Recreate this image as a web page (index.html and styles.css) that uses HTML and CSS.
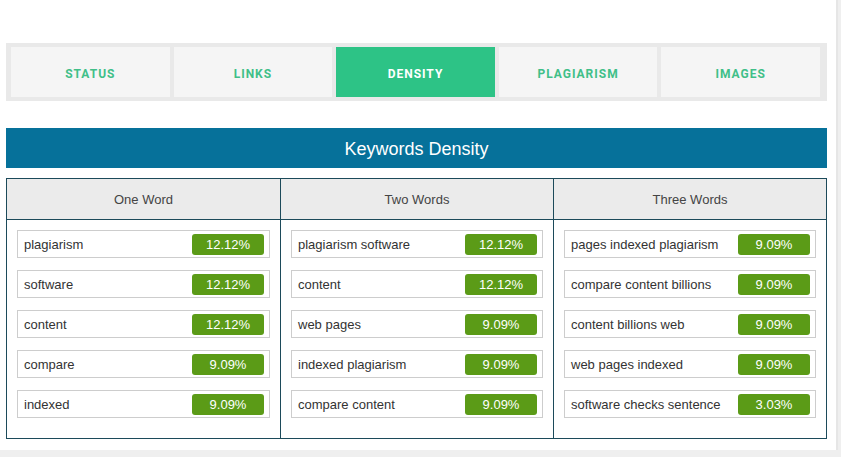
FILE: index.html
```html
<!DOCTYPE html>
<html>
    <head>
        <title>Keywords Density</title>
        <link rel="stylesheet" href="styles.css">
    </head>
    <body>
        <div class="panel">
            <nav class="tabs">
                <a class="tab">Status</a>
                <a class="tab">Links</a>
                <a class="tab active">Density</a>
                <a class="tab">Plagiarism</a>
                <a class="tab">Images</a>
            </nav>

            <h2 class="title">Keywords Density</h2>

            <div class="density">
                <div class="col">
                    <div class="head">One Word</div>
                    <div class="list">
                        <div class="kw"><span>plagiarism</span><span class="pct">12.12%</span></div>
                        <div class="kw"><span>software</span><span class="pct">12.12%</span></div>
                        <div class="kw"><span>content</span><span class="pct">12.12%</span></div>
                        <div class="kw"><span>compare</span><span class="pct">9.09%</span></div>
                        <div class="kw"><span>indexed</span><span class="pct">9.09%</span></div>
                    </div>
                </div>
                <div class="col">
                    <div class="head">Two Words</div>
                    <div class="list">
                        <div class="kw"><span>plagiarism software</span><span class="pct">12.12%</span></div>
                        <div class="kw"><span>content</span><span class="pct">12.12%</span></div>
                        <div class="kw"><span>web pages</span><span class="pct">9.09%</span></div>
                        <div class="kw"><span>indexed plagiarism</span><span class="pct">9.09%</span></div>
                        <div class="kw"><span>compare content</span><span class="pct">9.09%</span></div>
                    </div>
                </div>
                <div class="col">
                    <div class="head">Three Words</div>
                    <div class="list">
                        <div class="kw"><span>pages indexed plagiarism</span><span class="pct">9.09%</span></div>
                        <div class="kw"><span>compare content billions</span><span class="pct">9.09%</span></div>
                        <div class="kw"><span>content billions web</span><span class="pct">9.09%</span></div>
                        <div class="kw"><span>web pages indexed</span><span class="pct">9.09%</span></div>
                        <div class="kw"><span>software checks sentence</span><span class="pct">3.03%</span></div>
                    </div>
                </div>
            </div>
        </div>
    </body>
</html>
```

FILE: styles.css
```css
body {
    margin: 0;
    background-color: #efefef;
    font-family: "Liberation Sans", Arial, sans-serif;
    color: #3d3d3d;
}
.panel {
    box-sizing: border-box;
    width: 838px;
    height: 450px;
    padding: 43px 9px 0 6px;
    background-color: #fff;
    border-right: 2px solid #e6e6e6;
}

/* tabs */
.tabs {
    display: flex;
    gap: 4px;
    height: 58px;
    box-sizing: border-box;
    padding: 4px 7px 4px 5px;
    background-color: #e9e9e9;
}
.tab {
    flex: 1;
    display: flex;
    align-items: center;
    justify-content: center;
    padding-top: 3px;
    background-color: #f5f5f5;
    color: #40bf88;
    font-family: Roboto, "Liberation Sans", sans-serif;
    font-weight: bold;
    font-size: 12px;
    letter-spacing: 1px;
    text-transform: uppercase;
}
.tab.active {
    background-color: #2dc386;
    color: #fff;
}

/* heading bar */
.title {
    margin: 27px 0 10px;
    height: 40px;
    line-height: 42px;
    background-color: #06719a;
    color: #fff;
    font-size: 18px;
    font-weight: normal;
    text-align: center;
}

/* keyword table */
.density {
    display: grid;
    grid-template-columns: 1fr 1fr 1fr;
    border: 1px solid #1c4a5a;
}
.col + .col {
    border-left: 1px solid #1c4a5a;
}
.head {
    height: 40px;
    line-height: 42px;
    background-color: #ebebeb;
    border-bottom: 1px solid #1c4a5a;
    text-align: center;
    font-size: 13px;
    color: #444;
}
.list {
    display: flex;
    flex-direction: column;
    gap: 12px;
    padding: 10px 10px 20px;
}
.kw {
    display: flex;
    align-items: center;
    justify-content: space-between;
    box-sizing: border-box;
    height: 28px;
    padding: 0 5px 0 6px;
    border: 1px solid #cdcdcd;
    font-size: 13px;
    color: #333;
}
.pct {
    width: 72px;
    height: 21px;
    line-height: 21px;
    border-radius: 3px;
    background-color: #5b9b17;
    color: #fff;
    text-align: center;
}
```
